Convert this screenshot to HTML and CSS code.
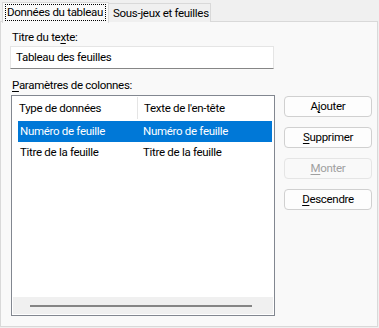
FILE: index.html
```html
<!DOCTYPE html>
<html lang="fr">
<head>
<meta charset="utf-8">
<link rel="stylesheet" href="styles.css">
</head>
<body>
<div class="tabs">
  <div class="tab active"><span class="focus">Données du tableau</span></div>
  <div class="tab">Sous-jeux et feuilles</div>
</div>
<div class="panel">
  <div class="lbl first">Titre du te<u>x</u>te:</div>
  <div class="input">Tableau des feuilles</div>
  <div class="lbl second"><u>P</u>aramètres de colonnes:</div>
  <div class="cols">
    <div class="list">
      <div class="head">
        <div class="c1">Type de données</div>
        <div class="c2">Texte de l'en-tête</div>
      </div>
      <div class="row sel">
        <div class="c1">Numéro de feuille</div>
        <div class="c2">Numéro de feuille</div>
      </div>
      <div class="row">
        <div class="c1">Titre de la feuille</div>
        <div class="c2">Titre de la feuille</div>
      </div>
      <div class="spacer"></div>
      <div class="hscroll"><div class="thumb"></div></div>
    </div>
    <div class="btns">
      <div class="btn">A<u>j</u>outer</div>
      <div class="btn"><u>S</u>upprimer</div>
      <div class="btn disabled"><u>M</u>onter</div>
      <div class="btn"><u>D</u>escendre</div>
    </div>
  </div>
</div>
</body>
</html>
```

FILE: styles.css
```css
* { box-sizing: border-box; }
html, body {
  margin: 0;
  padding: 0;
  background: #f0f0f0;
  font-family: Roboto, sans-serif;
  font-size: 11.5px;
  letter-spacing: -0.3px;
  line-height: 16px;
  color: #000;
  width: 379px;
  height: 328px;
  overflow: hidden;
}
u { text-decoration-thickness: 1px; text-underline-offset: 2px; }
.tabs {
  display: flex;
  align-items: flex-end;
  height: 22px;
  padding-left: 2px;
}
.tab {
  height: 19px;
  padding: 1px 1px 0 4px;
  border: 1px solid #d9d9d9;
  border-bottom: none;
  background: #f0f0f0;
  white-space: nowrap;
}
.tab.active {
  position: relative;
  z-index: 1;
  height: 21px;
  padding: 1px 2px 0 2px;
  background: #f9f9f9;
  margin-bottom: -1px;
}
.tab.active + .tab { border-left: none; }
.focus {
  display: block;
  border: 1px dotted #000;
  padding: 0 2px 0 1px;
  height: 17px;
  line-height: 15px;
}
.panel {
  width: 378px;
  height: 306px;
  margin-top: -1px;
  border: 1px solid #d9d9d9;
  background: #f9f9f9;
  padding: 7px 0 0 9px;
}
.lbl {
  padding-left: 2px;
  height: 16px;
}
.input {
  margin-top: 1px;
  width: 264px;
  height: 23px;
  background: #fff;
  border: 1px solid #e5e5e5;
  border-bottom-color: #868686;
  padding: 2px 0 0 5px;
}
.lbl.second { margin-top: 8px; }
.cols {
  display: flex;
  margin-top: 2px;
}
.list {
  margin-left: 1px;
  width: 264px;
  height: 221px;
  background: #fff;
  border: 1px solid #828790;
  display: flex;
  flex-direction: column;
  padding: 0 1px 1px 1px;
}
.head {
  display: flex;
  height: 23px;
  align-items: center;
  margin-bottom: 2px;
}
.head .c1 {
  width: 125px;
  padding-left: 6px;
  height: 22px;
  line-height: 22px;
  border-right: 1px solid #e5e5e5;
}
.head .c2 { padding-left: 6px; }
.row {
  display: flex;
  height: 21px;
  line-height: 21px;
  margin-left: 5px;
  margin-right: 1px;
}
.row .c1 { width: 125px; padding-left: 2px; }
.row .c2 { padding-left: 0; }
.row.sel { background: #0078d7; color: #fff; }
.spacer { flex: 1; }
.hscroll {
  height: 17px;
  background: #f0f0f0;
  display: flex;
  align-items: center;
  padding-left: 17px;
}
.thumb {
  width: 222px;
  height: 2px;
  background: #858585;
}
.btns {
  display: flex;
  flex-direction: column;
  gap: 10px;
  margin-left: 9px;
  margin-top: 1px;
}
.btn {
  width: 88px;
  height: 21px;
  border: 1px solid #d0d0d0;
  border-radius: 4px;
  background: #fdfdfd;
  text-align: center;
  line-height: 19px;
}
.btn.disabled {
  color: #a0a0a0;
  border-color: #e5e5e5;
  background: #f9f9f9;
}
```
